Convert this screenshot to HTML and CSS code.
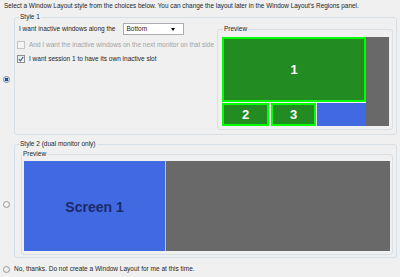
FILE: index.html
```html
<!DOCTYPE html>
<html lang="en">
<head>
    <meta charset="UTF-8">
    <title>Window Layout</title>
    <link rel="stylesheet" href="styles.css">
</head>
<body>
<p class="intro">Select a Window Layout style from the choices below. You can change the layout later in the Window Layout's Regions panel.</p>

<div class="choice">
    <div class="pick"><span class="radio checked"></span></div>
    <fieldset class="group group-one">
        <legend>Style 1</legend>
        <div class="style-one">
            <div class="options">
                <div class="row">
                    <span>I want inactive windows along the</span>
                    <span class="select">Bottom<span class="arrow"></span></span>
                </div>
                <div class="row check-row disabled">
                    <span class="box"></span>
                    <span>And I want the inactive windows on the next monitor on that side</span>
                </div>
                <div class="row check-row">
                    <span class="box">
                        <svg width="6" height="6" viewBox="0 0 6 6"><path d="M0.8 3.1 L2.4 4.9 L5.3 0.8" fill="none" stroke="#4a5f96" stroke-width="1.2"/></svg>
                    </span>
                    <span>I want session 1 to have its own inactive slot</span>
                </div>
            </div>
            <fieldset class="preview preview-one">
                <legend>Preview</legend>
                <div class="canvas-one">
                    <div class="regions">
                        <div class="region main">1</div>
                        <div class="slots">
                            <div class="region slot">2</div>
                            <div class="region slot">3</div>
                            <div class="free"></div>
                        </div>
                    </div>
                    <div class="monitor"></div>
                </div>
            </fieldset>
        </div>
    </fieldset>
</div>

<div class="choice">
    <div class="pick"><span class="radio lower"></span></div>
    <fieldset class="group group-two">
        <legend>Style 2 (dual monitor only)</legend>
        <fieldset class="preview preview-two">
            <legend>Preview</legend>
            <div class="canvas-two">
                <div class="screen">Screen 1</div>
                <div class="monitor"></div>
            </div>
        </fieldset>
    </fieldset>
</div>

<div class="choice none">
    <div class="pick"><span class="radio"></span></div>
    <span>No, thanks. Do not create a Window Layout for me at this time.</span>
</div>
</body>
</html>
```

FILE: styles.css
```css
:root {
    --bg: #f0f0f0;
    --text: #1e1e1e;
    --muted: #a3a3a3;
    --frame: #d5dfe5;
    --green: #228b22;
    --lime: #00ff00;
    --blue: #4169e1;
    --gray: #696969;
}

* {
    box-sizing: border-box;
}

body {
    margin: 0;
    background-color: var(--bg);
    font-family: 'Liberation Sans', Arial, sans-serif;
    font-size: 6.5px;
    line-height: 8px;
    color: var(--text);
    width: 400px;
    height: 277px;
    overflow: hidden;
}

.intro {
    margin: 0;
    padding: 2px 0 0 4px;
    font-size: 6.4px;
    white-space: nowrap;
}

.choice {
    display: flex;
    align-items: center;
}

.pick {
    width: 14px;
    flex: none;
}

.radio {
    display: block;
    width: 7px;
    height: 7px;
    margin-left: 3px;
    border: 1px solid #9a9a9a;
    border-radius: 50%;
    background: radial-gradient(circle at 40% 35%, #ffffff, #dcdcdc);
}

.radio.checked {
    margin-top: 14px;
    border-color: #7a8a99;
    background: radial-gradient(circle, #1f6fc6 0, #0a4a8e 1.6px, #d6dee6 2px, #f4f6f8 3px);
}

.radio.lower {
    margin-top: 16px;
}

fieldset {
    margin: 0;
    border: 1px solid var(--frame);
    border-radius: 3px;
    min-width: 0;
}

legend {
    padding: 0 1px;
    line-height: 6px;
    white-space: nowrap;
}

.group {
    flex: 1;
    margin-right: 3px;
}

.group-one {
    margin-top: 4px;
    padding: 3px 3px 4px 4px;
}

.group-two {
    margin-top: 6px;
    padding: 4px 3px 2px 6px;
}

.group-two legend {
    margin-left: -2px;
}

.style-one {
    display: flex;
}

.options {
    flex: 1;
    white-space: nowrap;
}

.row {
    display: flex;
    align-items: center;
}

.select {
    display: flex;
    justify-content: space-between;
    align-items: center;
    width: 61px;
    height: 12px;
    margin-left: 8px;
    padding: 0 8px 0 2px;
    border: 1px solid #abadb3;
    background-color: #ffffff;
}

.arrow {
    width: 0;
    height: 0;
    border-left: 2.5px solid transparent;
    border-right: 2.5px solid transparent;
    border-top: 3px solid #000000;
}

.check-row {
    margin-top: 5px;
    margin-left: -2px;
    height: 9px;
}

.box {
    display: flex;
    align-items: center;
    justify-content: center;
    width: 8px;
    height: 8px;
    margin-right: 4px;
    border: 1px solid #8e8f8f;
    background: linear-gradient(135deg, #e6e6e6, #ffffff);
}

.disabled {
    color: var(--muted);
}

.disabled .box {
    border-color: #c4c4c4;
    background: #f4f4f4;
}

.preview {
    flex: none;
}

.preview-one {
    width: 176px;
    margin-top: 3px;
    padding: 5px 3px 3px 4px;
}

.preview-one legend {
    margin-left: 1px;
}

.preview-two {
    padding: 4px 2px 3px 2px;
}

.canvas-one {
    display: flex;
    height: 89px;
}

.regions {
    width: 144px;
    display: flex;
    flex-direction: column;
}

.region {
    display: flex;
    align-items: center;
    justify-content: center;
    background-color: var(--green);
    border: 2px solid var(--lime);
    color: #ffffff;
    font-size: 13px;
    font-weight: bold;
}

.main {
    height: 66px;
}

.slots {
    display: grid;
    grid-template-columns: 47px 48px 49px;
    height: 23px;
    margin-top: 1px;
}

.slot:nth-child(2) {
    margin: 0 1px 0 2px;
}

.free {
    background-color: var(--blue);
}

.monitor {
    flex: 1;
    background-color: var(--gray);
}

.canvas-two {
    display: flex;
    height: 90px;
}

.screen {
    width: 142px;
    display: flex;
    align-items: center;
    justify-content: center;
    background-color: var(--blue);
    border-right: 1px solid #b8c4e6;
    color: #1b2a6b;
    font-size: 14px;
    font-weight: bold;
    padding-top: 1px;
}

.none {
    margin-top: 7px;
}
```
